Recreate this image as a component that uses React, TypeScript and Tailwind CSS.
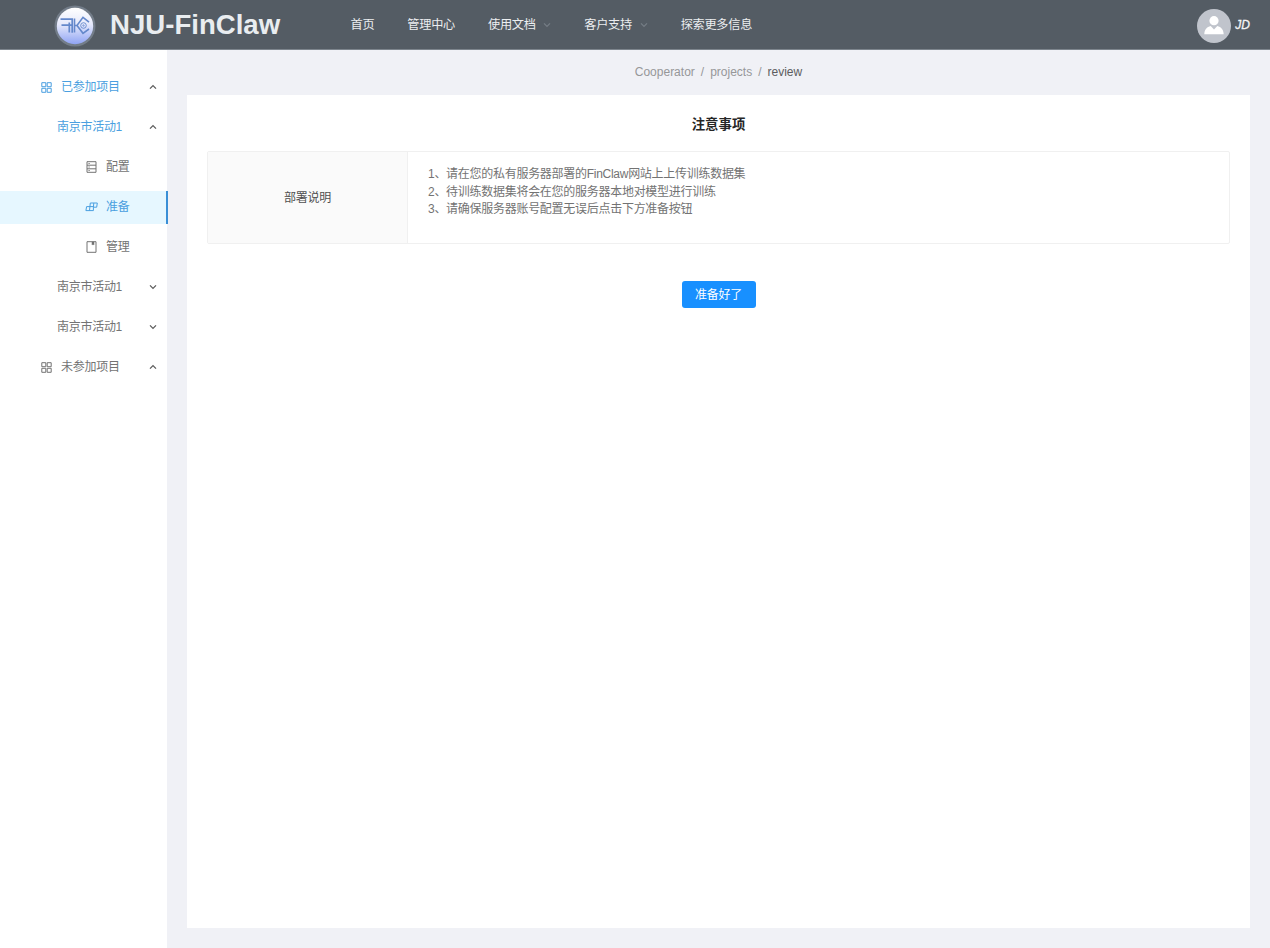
import type { ReactNode } from "react";

function Chevron({ up, className = "" }: { up?: boolean; className?: string }) {
  return (
    <svg viewBox="0 0 8 6" className={className} fill="none" stroke="currentColor" strokeWidth="1.3">
      <path d={up ? "M1 4.6 4 1.6 7 4.6" : "M1 1.4 4 4.4 7 1.4"} />
    </svg>
  );
}

function GridIcon() {
  return (
    <svg viewBox="0 0 11 11" className="size-[11px]" fill="none" stroke="currentColor">
      <path d="M.8.7h4v4h-4zM6.2.7h4v4h-4zM.8 6.3h4v4h-4zM6.2 6.3h4v4h-4z" />
    </svg>
  );
}

function ListIcon() {
  return (
    <svg viewBox="0 0 12 12" className="size-3" fill="none" stroke="currentColor">
      <path d="M2 .7h9v10.6H2zM2 4.2h9M2 7.8h9" />
      <path d="M3.5 2.5h1.2M3.5 6h1.2M3.5 9.5h1.2" />
    </svg>
  );
}

function ReadyIcon() {
  return (
    <svg viewBox="0 0 13 10" className="h-[10px] w-[13px]" fill="none" stroke="currentColor">
      <path d="M5.3 1h7l-.6 4.2H8.4V8.6H.9l.7-4H5M5.3 1l-.8 7.6M8.8 1 8.4 5.2M5 4.6h3.4" />
    </svg>
  );
}

function BookIcon() {
  return (
    <svg viewBox="0 0 12 12" className="size-3" fill="none" stroke="currentColor">
      <path d="M2 .7h9v10.6H2z" />
      <path d="M7 1v3l1-.8 1 .8V1z" fill="currentColor" strokeWidth=".5" />
    </svg>
  );
}

function Logo() {
  return (
    <svg viewBox="0 0 42 42" className="size-[42px]">
      <defs>
        <linearGradient id="disc" x1="0" y1="0" x2="0" y2="1">
          <stop offset="0" stopColor="#ffffff" />
          <stop offset=".45" stopColor="#e6e9fb" />
          <stop offset="1" stopColor="#8fa4f4" />
        </linearGradient>
      </defs>
      <circle cx="21" cy="21" r="20.5" fill="#737d89" />
      <circle cx="21" cy="21" r="18.2" fill="url(#disc)" />
      <g fill="none" stroke="#6488cb" strokeWidth="1.7">
        <path d="M6.5 14.2h11.7v13.5M7.5 20.2h11M15.3 17.5v10" />
        <path d="M20.5 13.5v14M20.5 20.5h2.5l6-8.2 6 4.9M23 20.5l6 7.8 6-4.3" strokeWidth="1.6" />
        <circle cx="29.5" cy="20.5" r="2.8" strokeWidth=".9" />
        <circle cx="29.5" cy="20.5" r=".7" strokeWidth=".8" />
      </g>
    </svg>
  );
}

const navItems = [
  { label: "首页" },
  { label: "管理中心" },
  { label: "使用文档", menu: true },
  { label: "客户支持", menu: true },
  { label: "探索更多信息" },
];

type Row = {
  label: string;
  indent: string;
  icon?: ReactNode;
  arrow?: "up" | "down";
  blue?: boolean;
  selected?: boolean;
};

const rows: Row[] = [
  { label: "已参加项目", indent: "pl-[41px]", icon: <GridIcon />, arrow: "up", blue: true },
  { label: "南京市活动1", indent: "pl-[57px]", arrow: "up", blue: true },
  { label: "配置", indent: "pl-[85px]", icon: <ListIcon /> },
  { label: "准备", indent: "pl-[85px]", icon: <ReadyIcon />, blue: true, selected: true },
  { label: "管理", indent: "pl-[85px]", icon: <BookIcon /> },
  { label: "南京市活动1", indent: "pl-[57px]", arrow: "down" },
  { label: "南京市活动1", indent: "pl-[57px]", arrow: "down" },
  { label: "未参加项目", indent: "pl-[41px]", icon: <GridIcon />, arrow: "up" },
];

export default function App() {
  return (
    <div className="flex h-[948px] w-[1270px] flex-col overflow-hidden bg-[#f0f1f6] font-['Liberation_Sans','Noto_Sans_CJK_SC',sans-serif] text-[12px] leading-[17.5px] tracking-[-0.28px] text-[#737373]">
      <header className="flex h-[50px] shrink-0 items-center border-b border-[#7d858d] bg-[#545c64] pr-5 pl-[54px]">
        <div className="flex w-[296.5px] items-center gap-[14px] pt-[2px] tracking-normal">
          <Logo />
          <span className="pb-px text-[27.6px] leading-[34px] font-bold text-[#e9edf0]">NJU-FinClaw</span>
        </div>
        <nav className="flex gap-[33px] pt-[3px] text-[12.2px] text-[#eceef0]">
          {navItems.map((item) => (
            <div key={item.label} className="flex items-center whitespace-nowrap">
              {item.label}
              {item.menu && <Chevron className="mb-[2px] ml-[7.7px] h-[6px] w-2 text-[#757d85]" />}
            </div>
          ))}
        </nav>
        <div className="ml-auto flex items-center gap-[4px] pt-[2px] tracking-normal">
          <svg viewBox="0 0 34 34" className="size-[34px]">
            <circle cx="17" cy="17" r="17" fill="#c0c4cc" />
            <circle cx="17" cy="11.7" r="4.6" fill="#fff" />
            <path d="M7.3 25.2c.2-4.5 2.5-7 6.4-8.1l3.3 3.3 3.3-3.3c3.9 1.1 6.1 3.6 6.4 8.1z" fill="#fff" />
          </svg>
          <span className="text-[12px] text-[#f4f5f6] italic [-webkit-text-stroke:0.3px_#f4f5f6]">JD</span>
        </div>
      </header>

      <div className="flex min-h-0 flex-1">
        <aside className="flex w-[168px] shrink-0 flex-col gap-[7px] border-r border-[#f0f1f6] bg-white pt-[21px]">
          {rows.map((row, i) => (
            <div
              key={i}
              className={`flex h-[33px] shrink-0 items-center pb-px ${row.indent} ${
                row.selected ? "-mr-px border-r-2 border-[#3a8fd6] bg-[#e6f7ff]" : "pr-[10px]"
              } ${row.blue ? "text-[#4a9fe0]" : "text-[#737373]"}`}
            >
              {row.icon && (
                <span className={row.indent === "pl-[41px]" ? "flex w-5 items-center" : "flex w-[21px] items-center"}>
                  {row.icon}
                </span>
              )}
              <span className="pt-px">{row.label}</span>
              {row.arrow && <Chevron up={row.arrow === "up"} className="ml-auto h-[6px] w-2 text-[#5c5c5c]" />}
            </div>
          ))}
        </aside>

        <main className="flex flex-1 flex-col pr-5 pb-5 pl-[19px]">
          <div className="flex h-[45px] shrink-0 items-center justify-center gap-[6px] text-[12px] tracking-normal text-[#969799]">
            <span>Cooperator</span>
            <span>/</span>
            <span>projects</span>
            <span>/</span>
            <span className="text-[#5c5d60]">review</span>
          </div>
          <section className="flex flex-1 flex-col items-center bg-white px-5 pt-5">
            <h1 className="text-[13.4px] leading-5 font-bold tracking-normal text-[#262626]">注意事项</h1>
            <div className="mt-4 flex h-[93px] w-full shrink-0 overflow-hidden rounded-[2px] border border-[#f0f0f0]">
              <div className="flex w-[200px] shrink-0 items-center justify-center border-r border-[#f0f0f0] bg-[#fafafa] pt-[2px] text-[#505050]">
                部署说明
              </div>
              <div className="pt-[14px] pl-5">
                <p>1、请在您的私有服务器部署的FinClaw网站上上传训练数据集</p>
                <p>2、待训练数据集将会在您的服务器本地对模型进行训练</p>
                <p>3、请确保服务器账号配置无误后点击下方准备按钮</p>
              </div>
            </div>
            <button className="mt-[37px] h-[27px] w-[74px] shrink-0 rounded-[3px] bg-[#1890ff] pt-[2px] tracking-[-0.28px] text-white">
              准备好了
            </button>
          </section>
        </main>
      </div>
    </div>
  );
}
